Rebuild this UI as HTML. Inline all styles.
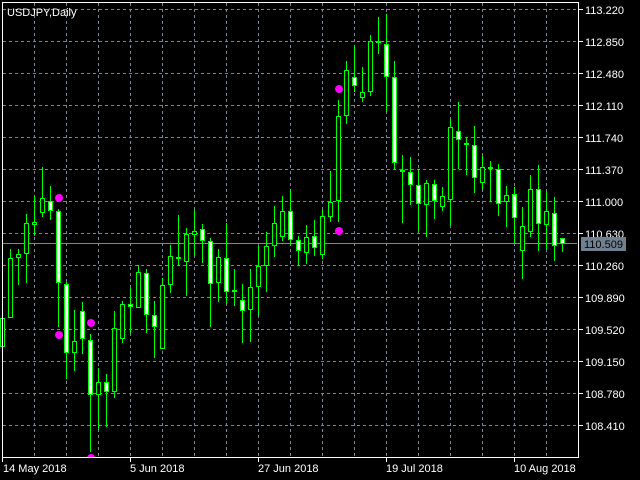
<!DOCTYPE html>
<html><head><meta charset="utf-8"><style>
html,body{margin:0;padding:0;background:#000;width:640px;height:480px;overflow:hidden}
svg{display:block}
text{font-family:"Liberation Sans",sans-serif;font-size:11px;fill:#fff}
</style></head><body>
<svg width="640" height="480" viewBox="0 0 640 480" xmlns="http://www.w3.org/2000/svg">
<rect width="640" height="480" fill="#000"/>
<g stroke="#778899" stroke-width="1" stroke-dasharray="3,3" fill="none">
<path d="M34.5 3V456M66.5 3V456M98.5 3V456M130.5 3V456M162.5 3V456M194.5 3V456M226.5 3V456M258.5 3V456M290.5 3V456M322.5 3V456M354.5 3V456M386.5 3V456M418.5 3V456M450.5 3V456M482.5 3V456M514.5 3V456M546.5 3V456"/>
<path d="M3 9.5H577M3 41.5H577M3 73.5H577M3 105.5H577M3 137.5H577M3 169.5H577M3 201.5H577M3 233.5H577M3 265.5H577M3 297.5H577M3 329.5H577M3 361.5H577M3 393.5H577M3 425.5H577"/>
</g>
<line x1="3" y1="243.5" x2="577" y2="243.5" stroke="#778899"/>
<g stroke="#00ff00" stroke-width="1">
<path d="M2.5 310V350M10.5 249V318M18.5 249V285M26.5 214V283M34.5 195V236M42.5 167V217M50.5 186V220M58.5 209V327M66.5 282V379M74.5 310V371M82.5 302V354M90.5 334V452M98.5 368V430M106.5 374V427M114.5 311V398M122.5 301V343M130.5 288V334M138.5 265V308M146.5 269V333M154.5 301V358M162.5 278V349M170.5 245V293M178.5 215V265M186.5 228V296M194.5 210V256M202.5 224V263M210.5 238V327M218.5 249V302M226.5 223V304M234.5 269V306M242.5 284V343M250.5 269V342M258.5 246V316M266.5 232V292M274.5 206V257M282.5 196V241M290.5 190V245M298.5 236V265M306.5 225V264M314.5 220V256M322.5 210V259M330.5 171V222M338.5 100V222M346.5 61V124M354.5 45V92M362.5 67V102M370.5 35V96M378.5 17V54M386.5 14V112M394.5 61V169M402.5 155V223M410.5 157V205M418.5 169V232M426.5 180V237M434.5 180V219M442.5 187V211M450.5 119V225M458.5 102V169M466.5 137V175M474.5 126V193M482.5 156V190M490.5 161V202M498.5 164V216M506.5 186V227M514.5 187V244M522.5 207V279M530.5 175V237M538.5 165V251M546.5 191V249M554.5 197V261M562.5 238V252"/>
<g fill="#000">
<rect x="0.5" y="318.5" width="4" height="28"/>
<rect x="8.5" y="258.5" width="4" height="59"/>
<rect x="16.5" y="254.5" width="4" height="3"/>
<rect x="24.5" y="223.5" width="4" height="30"/>
<rect x="32.5" y="222.5" width="4" height="2"/>
<rect x="40.5" y="198.5" width="4" height="14"/>
<rect x="72.5" y="341.5" width="4" height="11"/>
<rect x="96.5" y="382.5" width="4" height="12"/>
<rect x="112.5" y="328.5" width="4" height="63"/>
<rect x="120.5" y="304.5" width="4" height="34"/>
<rect x="136.5" y="272.5" width="4" height="35"/>
<rect x="160.5" y="285.5" width="4" height="63"/>
<rect x="168.5" y="256.5" width="4" height="28"/>
<rect x="184.5" y="234.5" width="4" height="27"/>
<rect x="192.5" y="231.5" width="4" height="3"/>
<rect x="216.5" y="257.5" width="4" height="25"/>
<rect x="248.5" y="287.5" width="4" height="22"/>
<rect x="256.5" y="266.5" width="4" height="20"/>
<rect x="264.5" y="246.5" width="4" height="19"/>
<rect x="272.5" y="223.5" width="4" height="22"/>
<rect x="280.5" y="211.5" width="4" height="25"/>
<rect x="304.5" y="237.5" width="4" height="15"/>
<rect x="320.5" y="216.5" width="4" height="38"/>
<rect x="328.5" y="202.5" width="4" height="14"/>
<rect x="336.5" y="116.5" width="4" height="84"/>
<rect x="344.5" y="70.5" width="4" height="45"/>
<rect x="360.5" y="92.5" width="4" height="5"/>
<rect x="368.5" y="41.5" width="4" height="50"/>
<rect x="424.5" y="183.5" width="4" height="21"/>
<rect x="440.5" y="196.5" width="4" height="10"/>
<rect x="448.5" y="127.5" width="4" height="72"/>
<rect x="480.5" y="167.5" width="4" height="15"/>
<rect x="504.5" y="195.5" width="4" height="6"/>
<rect x="520.5" y="226.5" width="4" height="24"/>
<rect x="528.5" y="189.5" width="4" height="42"/>
<rect x="544.5" y="211.5" width="4" height="13"/>
</g>
<g fill="#fff">
<rect x="48.5" y="201.5" width="4" height="9"/>
<rect x="56.5" y="211.5" width="4" height="71"/>
<rect x="64.5" y="284.5" width="4" height="68"/>
<rect x="80.5" y="311.5" width="4" height="27"/>
<rect x="88.5" y="340.5" width="4" height="54"/>
<rect x="104.5" y="382.5" width="4" height="9"/>
<rect x="128.5" y="304.5" width="4" height="2"/>
<rect x="144.5" y="273.5" width="4" height="41"/>
<rect x="152.5" y="315.5" width="4" height="11"/>
<rect x="176.5" y="257.5" width="4" height="1"/>
<rect x="200.5" y="229.5" width="4" height="11"/>
<rect x="208.5" y="241.5" width="4" height="42"/>
<rect x="224.5" y="258.5" width="4" height="33"/>
<rect x="232.5" y="290.5" width="4" height="1"/>
<rect x="240.5" y="300.5" width="4" height="10"/>
<rect x="288.5" y="211.5" width="4" height="28"/>
<rect x="296.5" y="240.5" width="4" height="10"/>
<rect x="312.5" y="236.5" width="4" height="11"/>
<rect x="352.5" y="77.5" width="4" height="8"/>
<rect x="376.5" y="41.5" width="4" height="1"/>
<rect x="384.5" y="44.5" width="4" height="32"/>
<rect x="392.5" y="77.5" width="4" height="85"/>
<rect x="400.5" y="170.5" width="4" height="1"/>
<rect x="408.5" y="172.5" width="4" height="12"/>
<rect x="416.5" y="185.5" width="4" height="18"/>
<rect x="432.5" y="184.5" width="4" height="16"/>
<rect x="456.5" y="131.5" width="4" height="8"/>
<rect x="464.5" y="143.5" width="4" height="1"/>
<rect x="472.5" y="145.5" width="4" height="32"/>
<rect x="488.5" y="167.5" width="4" height="1"/>
<rect x="496.5" y="169.5" width="4" height="34"/>
<rect x="512.5" y="194.5" width="4" height="23"/>
<rect x="536.5" y="189.5" width="4" height="34"/>
<rect x="552.5" y="213.5" width="4" height="32"/>
<rect x="560.5" y="238.5" width="4" height="5"/>
</g>
</g>
<g fill="#ff00ff">
<circle cx="59" cy="198" r="4"/><circle cx="59" cy="335" r="4"/>
<circle cx="91" cy="323" r="4"/><circle cx="91" cy="458" r="4"/>
<circle cx="339" cy="89" r="4"/><circle cx="339" cy="231" r="4"/>
</g>
<rect x="0" y="458" width="640" height="22" fill="#000"/>
<g stroke="#fff" fill="none" stroke-width="1">
<path d="M2.5 2.5H578.5V457.5H2.5Z"/>
<path d="M578 9.5h5M578 41.5h5M578 73.5h5M578 105.5h5M578 137.5h5M578 169.5h5M578 201.5h5M578 233.5h5M578 265.5h5M578 297.5h5M578 329.5h5M578 361.5h5M578 393.5h5M578 425.5h5"/>
<path d="M2.5 457v5M130.5 457v5M258.5 457v5M386.5 457v5M514.5 457v5"/>
</g>
<text x="7" y="16">USDJPY,Daily</text>
<g>
<text x="585" y="14">113.220</text>
<text x="585" y="46">112.850</text>
<text x="585" y="78">112.480</text>
<text x="585" y="110">112.110</text>
<text x="585" y="142">111.740</text>
<text x="585" y="174">111.370</text>
<text x="585" y="206">111.000</text>
<text x="585" y="238">110.630</text>
<text x="585" y="270">110.260</text>
<text x="585" y="302">109.890</text>
<text x="585" y="334">109.520</text>
<text x="585" y="366">109.150</text>
<text x="585" y="398">108.780</text>
<text x="585" y="430">108.410</text>
</g>
<rect x="581" y="237" width="45" height="14" fill="#708090"/>
<text x="584" y="248" style="fill:#000">110.509</text>
<text x="3" y="472">14 May 2018</text>
<text x="130" y="472">5 Jun 2018</text>
<text x="258" y="472">27 Jun 2018</text>
<text x="386" y="472">19 Jul 2018</text>
<text x="514" y="472">10 Aug 2018</text>
</svg>
</body></html>
